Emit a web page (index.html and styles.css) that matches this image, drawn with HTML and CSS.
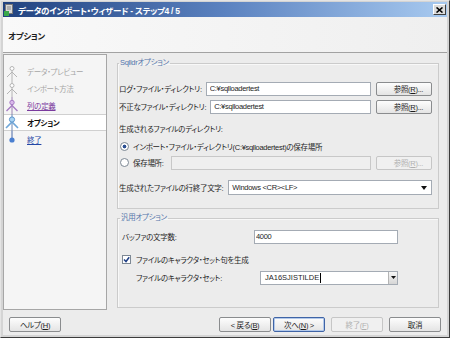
FILE: index.html
```html
<!DOCTYPE html>
<html lang="ja">
<head>
    <meta charset="UTF-8">
    <title>データのインポート・ウィザード - ステップ4 / 5</title>
    <link rel="stylesheet" href="styles.css">
</head>
<body>
    <div class="window">
        <div class="titlebar">
            <svg class="app-icon" width="9" height="12" viewBox="0 0 9 12">
                <rect x="1.5" y="0.5" width="7" height="9" fill="#d8d8d8" stroke="#7a7a7a"/>
                <line x1="3" y1="3" x2="7" y2="3" stroke="#8a8a8a"/>
                <line x1="3" y1="5" x2="7" y2="5" stroke="#8a8a8a"/>
                <rect x="0" y="7" width="5" height="5" fill="#3aa84a"/>
            </svg>
            <span class="title-text">データのインポート・ウィザード - ステップ4 / 5</span>
            <span class="close-btn">
                <svg width="7" height="6" viewBox="0 0 7 6">
                    <path d="M0.5 0.5 L6.5 5.5 M6.5 0.5 L0.5 5.5" stroke="#000" stroke-width="1.6"/>
                </svg>
            </span>
        </div>

        <div class="client">
            <div class="page-header">オプション</div>

            <div class="wizard-body">
                <ul class="steps">
                    <li class="step step-dim">
                        <svg class="step-icon" width="16" height="17" viewBox="0 0 16 17">
                            <line x1="8" y1="8" x2="8" y2="17" stroke="#b4b4b4"/>
                            <path d="M3 14 L8 9 L13 14" fill="none" stroke="#b4b4b4"/>
                            <circle cx="8" cy="5.5" r="2" fill="#fff" stroke="#b4b4b4"/>
                        </svg>
                        <span>データ・プレビュー</span>
                    </li>
                    <li class="step step-dim">
                        <svg class="step-icon" width="16" height="17" viewBox="0 0 16 17">
                            <line x1="8" y1="0" x2="8" y2="17" stroke="#b4b4b4"/>
                            <path d="M3 14 L8 9 L13 14" fill="none" stroke="#b4b4b4"/>
                            <circle cx="8" cy="5.5" r="2" fill="#fff" stroke="#b4b4b4"/>
                        </svg>
                        <span>インポート方法</span>
                    </li>
                    <li class="step step-visited">
                        <svg class="step-icon" width="16" height="17" viewBox="0 0 16 17">
                            <line x1="8" y1="0" x2="8" y2="17" stroke="#9c84b0"/>
                            <path d="M2.5 14 L8 8.5 L13.5 14" fill="none" stroke="#a77cc4" stroke-width="1.4"/>
                            <circle cx="8" cy="5.5" r="2.2" fill="#d9b8ea" stroke="#a77cc4"/>
                        </svg>
                        <span class="step-link">列の定義</span>
                    </li>
                    <li class="step step-current">
                        <svg class="step-icon" width="16" height="17" viewBox="0 0 16 17">
                            <line x1="8" y1="0" x2="8" y2="17" stroke="#6d86b4"/>
                            <path d="M2 14 L8 8 L14 14" fill="none" stroke="#6fa6d8" stroke-width="1.6"/>
                            <circle cx="8" cy="5.5" r="2.6" fill="#a9d4f4" stroke="#5f96cc"/>
                        </svg>
                        <span>オプション</span>
                    </li>
                    <li class="step step-next">
                        <svg class="step-icon" width="16" height="17" viewBox="0 0 16 17">
                            <line x1="8" y1="0" x2="8" y2="8" stroke="#4b6aa8"/>
                            <circle cx="8" cy="9" r="2.6" fill="#4a7fd0"/>
                        </svg>
                        <span class="step-link">終了</span>
                    </li>
                </ul>

                <div class="page">
                    <fieldset class="group group-sqlldr">
                        <legend>Sqlldrオプション</legend>
                        <div class="row">
                            <label class="row-label">ログ・ファイル・ディレクトリ:</label>
                            <input class="textbox" type="text" value="C:¥sqlloadertest">
                            <button class="btn btn-browse">参照(<u>R</u>)...</button>
                        </div>
                        <div class="row row-gap">
                            <label class="row-label">不正なファイル・ディレクトリ:</label>
                            <input class="textbox" type="text" value="C:¥sqlloadertest">
                            <button class="btn btn-browse">参照(<u>R</u>)...</button>
                        </div>
                        <div class="sub-heading">生成されるファイルのディレクトリ:</div>
                        <div class="choice-row">
                            <span class="radio radio-on"></span>
                            <span>インポート・ファイル・ディレクトリ(C:¥sqlloadertest)の保存場所</span>
                        </div>
                        <div class="row row-gap">
                            <span class="radio"></span>
                            <label class="row-label radio-label">保存場所:</label>
                            <input class="textbox" type="text" disabled>
                            <button class="btn btn-browse" disabled>参照(<u>R</u>)...</button>
                        </div>
                        <div class="row row-select">
                            <label class="row-label">生成されたファイルの行終了文字:</label>
                            <div class="dropdown">
                                <span>Windows &lt;CR&gt;&lt;LF&gt;</span>
                                <svg width="6" height="4" viewBox="0 0 6 4"><path d="M0 0 H6 L3 4 Z" fill="#111"/></svg>
                            </div>
                        </div>
                    </fieldset>

                    <fieldset class="group group-general">
                        <legend>汎用オプション</legend>
                        <div class="row">
                            <label class="row-label buffer-label">バッファの文字数:</label>
                            <input class="textbox buffer-input" type="text" value="4000">
                        </div>
                        <div class="choice-row check-row">
                            <span class="checkbox">
                                <svg width="7" height="7" viewBox="0 0 7 7"><path d="M1 3.5 L3 5.5 L6.2 1.2" fill="none" stroke="#1f3f86" stroke-width="1.5"/></svg>
                            </span>
                            <span>ファイルのキャラクタ・セット句を生成</span>
                        </div>
                        <div class="row charset-row">
                            <label class="row-label charset-label">ファイルのキャラクタ・セット:</label>
                            <div class="combobox">
                                <span class="combo-text">JA16SJISTILDE</span><span class="caret"></span>
                                <span class="combo-btn">
                                    <svg width="5" height="3" viewBox="0 0 5 3"><path d="M0 0 H5 L2.5 3 Z" fill="#111"/></svg>
                                </span>
                            </div>
                        </div>
                    </fieldset>
                </div>
            </div>

            <div class="footer">
                <button class="btn btn-wide">ヘルプ(<u>H</u>)</button>
                <div class="nav-buttons">
                    <button class="btn btn-wide">&lt; 戻る(<u>B</u>)</button>
                    <button class="btn btn-wide btn-default">次へ(<u>N</u>) &gt;</button>
                    <button class="btn btn-wide" disabled>終了(<u>F</u>)</button>
                    <button class="btn btn-wide">取消</button>
                </div>
            </div>
        </div>
    </div>
</body>
</html>
```

FILE: styles.css
```css
* {
    box-sizing: border-box;
}
body {
    margin: 0;
    font-family: "Liberation Sans", "Noto Sans CJK JP", sans-serif;
    font-size: 7.5px;
    letter-spacing: -0.3px;
    font-feature-settings: "palt" 1;
    color: #1e1e1e;
    background: #d4d4d4;
}
.window {
    width: 450px;
    height: 338px;
    display: flex;
    flex-direction: column;
    border: 1px solid;
    border-color: #e4e4e4 #3c3c3c #3c3c3c #e4e4e4;
    padding: 1px 2px 2px 2px;
    background: #d4d4d4;
}

/* title bar */
.titlebar {
    height: 15px;
    flex: none;
    display: flex;
    align-items: center;
    padding: 0 1px 0 1px;
    background: linear-gradient(to right, #21427f, #5b82c0 50%, #a8caf0);
    color: #fff;
}
.app-icon {
    margin-right: 5px;
}
.title-text {
    flex: 1;
    font-size: 8.5px;
    font-weight: bold;
    white-space: nowrap;
}
.close-btn {
    width: 13px;
    height: 11px;
    display: flex;
    align-items: center;
    justify-content: center;
    background: #dcdcdc;
    border: 1px solid;
    border-color: #fff #404040 #404040 #fff;
}

.client {
    flex: 1;
    display: flex;
    flex-direction: column;
    background: #ececec;
}
.page-header {
    height: 36px;
    flex: none;
    display: flex;
    align-items: center;
    padding-left: 5px;
    border-bottom: 1px solid #a2a2a2;
    background: linear-gradient(to right, #f9f9f9, #efefef);
    font-size: 8.5px;
    font-weight: bold;
}
.wizard-body {
    height: 256px;
    flex: none;
    margin-top: 1px;
    display: flex;
}

/* step list */
.steps {
    width: 104px;
    flex: none;
    margin: 0;
    padding: 8px 0 0 0;
    list-style: none;
    border: 1px solid #a6a6a6;
    background: #f5f5f5;
}
.step {
    height: 17px;
    display: flex;
    align-items: center;
    white-space: nowrap;
}
.step-icon {
    flex: none;
    margin-right: 7px;
}
.step-dim {
    color: #a6a6a6;
}
.step-visited .step-link {
    color: #7a3a9e;
    text-decoration: underline;
}
.step-current {
    background: #fff;
    border-top: 1px solid #d0d0d0;
    border-bottom: 1px solid #d0d0d0;
    font-weight: bold;
    color: #111;
}
.step-next .step-link {
    color: #2447a6;
    text-decoration: underline;
}

/* option page */
.page {
    flex: 1;
    padding: 4px 8px 0 10px;
}
.group {
    margin: 0;
    border: 1px solid #cbcbcb;
    box-shadow: inset 1px 1px 0 #f8f8f8;
}
.group legend {
    padding: 0 1px;
    line-height: 10px;
    color: #5575ab;
}
.group-sqlldr {
    padding: 13px 6px 13px 1px;
}
.group-general {
    height: 95px;
    margin-top: 4px;
    padding: 6px 6px 0 4px;
}
.group-general legend {
    margin-left: -2px;
}

.row {
    height: 15px;
    display: flex;
    align-items: center;
}
.row-gap {
    margin-top: 3px;
}
.row-select {
    margin-top: 10px;
}
.row-label {
    flex: none;
    white-space: nowrap;
}
.sub-heading {
    height: 12px;
    margin-top: 10px;
    line-height: 12px;
}
.choice-row {
    height: 12px;
    margin-top: 4px;
    display: flex;
    align-items: center;
    white-space: nowrap;
}

.textbox {
    flex: 1;
    min-width: 0;
    height: 14px;
    margin: 0 0 0 4px;
    padding: 0 3px;
    border: 1px solid #a4abb4;
    background: #fff;
    font: inherit;
    letter-spacing: inherit;
    color: #1e1e1e;
}
.textbox:disabled {
    background: #efefef;
    border-color: #c8c8c8;
}

.radio {
    width: 9px;
    height: 9px;
    flex: none;
    margin: 0 4px 0 1px;
    border: 1px solid #7d8894;
    border-radius: 50%;
    background: #fff;
}
.radio-on {
    background: radial-gradient(circle, #2b4f92 0, #2b4f92 1.6px, #fff 2.2px);
}
.radio-label {
    margin-right: 3px;
}

.dropdown {
    flex: 1;
    height: 15px;
    margin-left: 5px;
    display: flex;
    align-items: center;
    justify-content: space-between;
    padding: 0 4px 0 3px;
    border: 1px solid #a4abb4;
    background: #fff;
}

.btn {
    height: 14px;
    padding: 0;
    border: 1px solid #8a8c8e;
    border-radius: 2px;
    background: linear-gradient(#fdfdfd, #e4e4e4);
    font: inherit;
    letter-spacing: inherit;
    color: #1e1e1e;
    white-space: nowrap;
}
.btn:disabled {
    border-color: #c6c6c6;
    background: #f0f0f0;
    color: #b0b0b0;
}
.btn-browse {
    width: 56px;
    flex: none;
    margin-left: 5px;
    text-align: right;
    padding-right: 8px;
}
.btn-wide {
    width: 52px;
    height: 15px;
}
.btn-default {
    border-color: #3f64a6;
    box-shadow: inset 0 0 0 1px #b3c9ea;
}

/* general options */
.buffer-label {
    width: 132px;
}
.buffer-input {
    flex: none;
    width: 144px;
    margin-left: 0;
    padding-left: 1px;
}
.check-row {
    margin-top: 9px;
}
.checkbox {
    width: 9px;
    height: 9px;
    flex: none;
    margin-right: 5px;
    display: flex;
    align-items: center;
    justify-content: center;
    border: 1px solid #7d8894;
    background: #fff;
}
.charset-row {
    margin-top: 5px;
    padding-left: 14px;
}
.charset-label {
    width: 124px;
}
.combobox {
    width: 138px;
    height: 14px;
    display: flex;
    align-items: center;
    padding-left: 4px;
    border: 1px solid #a4abb4;
    background: #fff;
}
.combo-text {
    letter-spacing: 0;
}
.caret {
    width: 1px;
    height: 10px;
    margin-left: 1px;
    background: #000;
}
.combo-btn {
    width: 9px;
    height: 12px;
    margin-left: auto;
    display: flex;
    align-items: center;
    justify-content: center;
    border-left: 1px solid #b4b4b4;
    background: linear-gradient(#f6f6f6, #d6d6d6);
}

/* footer */
.footer {
    flex: 1;
    display: flex;
    justify-content: space-between;
    align-items: flex-start;
    padding: 7px 6px 0 6px;
}
.nav-buttons {
    display: flex;
    gap: 6px;
}
.nav-buttons .btn-default {
    margin-left: -4px;
}
```
